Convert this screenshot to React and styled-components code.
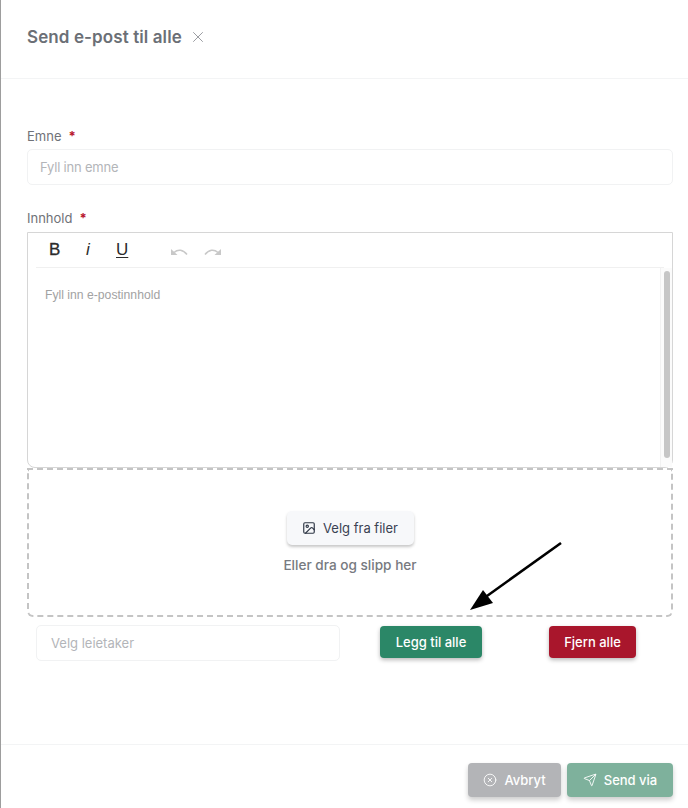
import React from "react";
import styled, { createGlobalStyle } from "styled-components";
import { X, Image as ImageIcon, CircleX, Send } from "lucide-react";

const Global = createGlobalStyle`
  html, body { margin: 0; padding: 0; background: #fff; }
  body { font-family: Inter, "Noto Sans", sans-serif; }
  * { box-sizing: border-box; }
`;

const Drawer = styled.div`
  position: relative;
  width: 688px;
  height: 808px;
  display: flex;
  flex-direction: column;
  border-left: 1px solid #9d9d9d;
  background: #fff;
  overflow: hidden;
`;
const EdgeTick = styled.div`
  position: absolute;
  left: -1px;
  top: ${p => p.$top}px;
  width: 1px;
  height: 4px;
  background: #5c5c5c;
`;
const Header = styled.header`
  height: 79px;
  flex: none;
  display: flex;
  align-items: center;
  gap: 7px;
  padding: 0 0 4px 26px;
  border-bottom: 1px solid #f3f4f5;
`;
const Title = styled.h1`
  margin: 0;
  font-size: 17px;
  font-weight: 600;
  color: #6b6f76;
  letter-spacing: 0.1px;
`;
const CloseIcon = styled(X)`
  width: 18px;
  height: 18px;
  color: #85888e;
`;
const Body = styled.main`
  flex: 1;
  padding: 48px 15px 0 26px;
  display: flex;
  flex-direction: column;
`;
const Label = styled.label`
  display: block;
  font-size: 13px;
  line-height: 18px;
  color: #6f7278;
  font-weight: 400;
  margin-bottom: ${p => p.$mb}px;
`;
const Star = styled.span`
  color: #b8172e;
  margin-left: 7px;
  font-size: 13px;
  font-weight: 700;
`;
const TextField = styled.div`
  height: 36px;
  width: ${p => p.$width || "100%"};
  flex: none;
  border: 1px solid #f1f2f3;
  border-radius: 5px;
  display: flex;
  align-items: center;
  padding-left: ${p => p.$pad || 12}px;
  font-size: 13px;
  letter-spacing: ${p => p.$track || 0}px;
  color: #b3b5b9;
  background: #fff;
`;
const Field = styled.div`
  margin-bottom: ${p => p.$gap || 0}px;
`;
const Editor = styled.div`
  height: 236px;
  border: 1px solid #d6d6d6;
  border-radius: 0 0 8px 8px;
  margin-top: -1px;
  display: flex;
  flex-direction: column;
  background: #fff;
`;
const Toolbar = styled.div`
  height: 35px;
  flex: none;
  margin: 0 8px;
  display: flex;
  align-items: center;
  border-bottom: 1px solid #f0f0f0;
  color: #2b2b2b;
  padding-left: 13px;
`;
const FormatButton = styled.span`
  width: ${p => (p.$kind === "b" ? 37 : p.$kind === "i" ? 30 : 36)}px;
  font-family: "Liberation Sans", Arial, sans-serif;
  font-size: 17px;
  line-height: 18px;
  font-weight: 400;
  font-style: ${p => (p.$kind === "i" ? "italic" : "normal")};
  text-decoration: ${p => (p.$kind === "u" ? "underline" : "none")};
  text-underline-offset: 2px;
  -webkit-text-stroke: ${p => (p.$kind === "b" ? "0.3px" : "0")};
`;
const HistoryGroup = styled.div`
  display: flex;
  gap: 16px;
  margin-left: 18px;
`;
const HistoryIcon = styled.svg`
  width: 18px;
  height: 10px;
  margin-top: 2px;
  color: #c8c8c8;
  transform: ${p => (p.$flip ? "scaleX(-1)" : "none")};
`;
const EditorBody = styled.div`
  flex: 1;
  display: flex;
`;
const EditorText = styled.div`
  flex: 1;
  padding: 20px 0 0 17px;
  font-family: "Liberation Sans", Arial, sans-serif;
  font-size: 12.2px;
  line-height: 14px;
  color: #a2a2a2;
`;
const ScrollTrack = styled.div`
  width: 12px;
  flex: none;
  padding: 3px 2px 9px 3px;
  border-left: 1px solid #f1f1f1;
  background: #fbfbfb;
`;
const ScrollThumb = styled.div`
  width: 6px;
  height: 100%;
  border-radius: 3px;
  background: #c6c6c6;
`;
const DropZone = styled.div`
  height: 149px;
  flex: none;
  border: 2px dashed #c4c4c4;
  border-radius: 0 0 6px 6px;
  display: flex;
  flex-direction: column;
  align-items: center;
  padding-top: 41px;
`;
const PickButton = styled.div`
  width: 127px;
  height: 34px;
  border-radius: 5px;
  background: #f7f8fa;
  box-shadow: 0 2px 3px rgba(0, 0, 0, 0.22);
  display: flex;
  align-items: center;
  justify-content: center;
  gap: 7px;
  font-size: 13px;
  color: #3a4252;
  font-weight: 400;
`;
const PickIcon = styled(ImageIcon)`
  width: 14px;
  height: 14px;
  color: #2f3746;
`;
const DropHint = styled.div`
  margin-top: 11px;
  font-size: 13.6px;
  line-height: 18px;
  font-weight: 500;
  color: #777a80;
`;
const AssignRow = styled.div`
  display: flex;
  align-items: center;
  padding: 8px 0 0 9px;
`;
const Action = styled.button`
  border: 0;
  height: 32px;
  width: ${p => p.$w}px;
  margin-left: ${p => p.$ml}px;
  flex: none;
  margin-top: -2px;
  border-radius: 4px;
  background: ${p => p.$bg};
  color: #fff;
  font: 500 13px Inter, "Noto Sans", sans-serif;
  box-shadow: 0 2px 4px rgba(0, 0, 0, 0.28);
`;
const Footer = styled.footer`
  height: 64px;
  flex: none;
  border-top: 1px solid #f3f4f5;
  display: flex;
  justify-content: flex-end;
  gap: 6px;
  padding: 18px 15px 0 0;
`;
const FootButton = styled.button`
  border: 0;
  width: ${p => p.$w}px;
  height: 34px;
  border-radius: 4px;
  background: ${p => p.$bg};
  color: #fff;
  font: 500 13px Inter, "Noto Sans", sans-serif;
  display: flex;
  align-items: center;
  justify-content: center;
  gap: 7px;
  box-shadow: 0 3px 5px rgba(0, 0, 0, 0.2);
  svg { width: 14px; height: 14px; }
`;
const Arrow = styled.svg`
  position: absolute;
  left: 459px;
  top: 535px;
  width: 110px;
  height: 82px;
`;

const HistoryArrow = ({ flip }) => (
  <HistoryIcon $flip={flip} viewBox="0 0 18 10">
    <path d="M4 6.5C8 3 13 3.5 17 8.5" fill="none" stroke="currentColor" strokeWidth="1.6" />
    <polygon points="1,3 1,9 7.5,9" fill="currentColor" />
  </HistoryIcon>
);

export default function App() {
  return (
    <Drawer>
      <Global />
      <EdgeTick $top={382} />
      <EdgeTick $top={390} />
      <Header>
        <Title>Send e-post til alle</Title>
        <CloseIcon strokeWidth={1.1} />
      </Header>
      <Body>
        <Field $gap={24}>
          <Label $mb={4}>Emne<Star>*</Star></Label>
          <TextField $track={-0.2}>Fyll inn emne</TextField>
        </Field>
        <Field>
          <Label $mb={6}>Innhold<Star>*</Star></Label>
          <Editor>
            <Toolbar>
              <FormatButton $kind="b">B</FormatButton>
              <FormatButton $kind="i">i</FormatButton>
              <FormatButton $kind="u">U</FormatButton>
              <HistoryGroup>
                <HistoryArrow />
                <HistoryArrow flip />
              </HistoryGroup>
            </Toolbar>
            <EditorBody>
              <EditorText>Fyll inn e-postinnhold</EditorText>
              <ScrollTrack><ScrollThumb /></ScrollTrack>
            </EditorBody>
          </Editor>
        </Field>
        <DropZone>
          <PickButton><PickIcon strokeWidth={2} />Velg fra filer</PickButton>
          <DropHint>Eller dra og slipp her</DropHint>
        </DropZone>
        <AssignRow>
          <TextField $width="304px" $pad={14}>Velg leietaker</TextField>
          <Action $w={102} $ml={40} $bg="#2b8767">Legg til alle</Action>
          <Action $w={87} $ml={67} $bg="#a9162c">Fjern alle</Action>
        </AssignRow>
      </Body>
      <Footer>
        <FootButton $w={93} $bg="#b3b4b7"><CircleX strokeWidth={1.5} />Avbryt</FootButton>
        <FootButton $w={106} $bg="#7eb19c"><Send strokeWidth={1.5} />Send via</FootButton>
      </Footer>
      <Arrow viewBox="0 0 110 82">
        <line x1="101" y1="8" x2="20" y2="66" stroke="#000" strokeWidth="2.6" />
        <polygon points="10,75 23,55 33,68" fill="#000" />
      </Arrow>
    </Drawer>
  );
}
